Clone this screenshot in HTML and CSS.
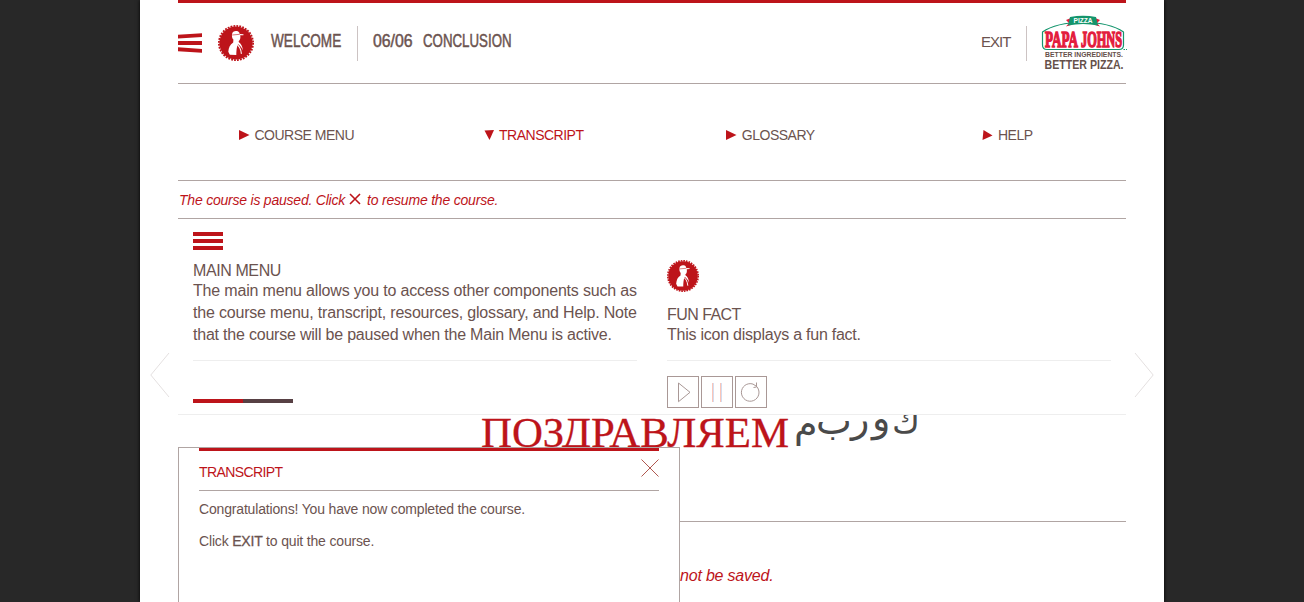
FILE: index.html
```html
<!DOCTYPE html>
<html lang="en">
<head>
<meta charset="utf-8">
<title>Conclusion</title>
<link rel="stylesheet" href="styles.css">
</head>
<body>
<svg class="defs" width="0" height="0">
  <symbol id="seal" viewBox="0 0 36 36">
    <circle cx="18" cy="18" r="16.6" fill="#bd141a"/>
    <circle cx="18" cy="18" r="17.1" fill="none" stroke="#bd141a" stroke-width="1.8" stroke-dasharray="1.8 1.18"/>
    <path fill="#fff" d="M14 9.400C14.300 6.600 16.400 5.800 18.600 6C20.600 6.200 21.400 7.400 21.700 8.900L25.500 9.300L25.400 10.200L22.200 10.300C22.700 12.500 22.300 15 20.800 16L20.400 18.400C19 20.500 18.500 23.500 18.300 29.900L11.800 29.700L10.300 26.700C10.700 22.500 12 19.300 15.200 17.400L15.400 14.600C14.300 13.500 13.700 11.500 14 9.400Z"/>
    <path fill="none" stroke="#bd141a" stroke-width=".6" d="M14.200 10L21.800 9.300"/>
    <path fill="none" stroke="#fff" stroke-width="1.100" d="M17.500 18.500C21 20.300 23 24 23.400 28.900"/>
    <path fill="#fff" d="M20.300 16.800C23 18.300 24.600 21.500 24.800 25.500C23.500 22 21.800 19.800 19 18.500Z"/>
  </symbol>
</svg>
<div class="page">
  <header class="header">
    <svg class="burger" width="24" height="20" viewBox="0 0 24 20" fill="#bd141a"><path d="M0 1.700L24 .3V4L0 5.500ZM0 8H24V12H0ZM0 14.300L24 16V19.800L0 18.200Z"/></svg>
    <svg class="seal" width="36" height="36"><use href="#seal"/></svg>
    <div class="crumb crumb-first"><span class="narrow title">WELCOME</span></div>
    <div class="crumb crumb-count"><span class="narrow count">06/06</span></div>
    <div class="crumb crumb-last"><span class="narrow name">CONCLUSION</span></div>
    <div class="exit">EXIT</div>
    <svg class="logo" width="88" height="58" viewBox="1040 13 88 58">
      <path d="M1047 48.500Q1042.500 48.500 1042.500 44V31C1051 25 1065 21.500 1083 21.500S1115 25 1123.500 31V44Q1123.500 48.500 1119 48.500Z" fill="#fff" stroke="#14956d" stroke-width="1.200"/>
      <path d="M1066 19L1071 17V24L1066 25.500L1069 22ZM1100 19L1095 17V24L1100 25.500L1097 22Z" fill="#e31c3d"/>
      <path d="M1070 16Q1083 13.500 1096 16L1098 24.500Q1083 21.500 1068 24.500Z" fill="#14956d"/>
      <text x="1073.500" y="21.700" class="logo-pizza" textLength="19" lengthAdjust="spacingAndGlyphs">PIZZA</text>
      <text x="1045" y="45.500" class="logo-name" textLength="33" lengthAdjust="spacingAndGlyphs">PAPA</text>
      <text x="1081" y="45.500" class="logo-name" textLength="41" lengthAdjust="spacingAndGlyphs">JOHNS</text>
      <text x="1045" y="56" class="logo-tag" font-size="7.500" textLength="78" lengthAdjust="spacingAndGlyphs">BETTER INGREDIENTS.</text>
      <text x="1044.500" y="67.700" class="logo-tag" font-size="12.500" textLength="79" lengthAdjust="spacingAndGlyphs">BETTER PIZZA.</text>
      <path d="M1123.500 48.500h1.500M1126 48.500h1" stroke="#14956d"/>
    </svg>
  </header>

  <nav class="nav">
    <a class="nav-item"><svg width="11" height="10" viewBox="0 0 11 10"><path d="M0 0L10.500 5L0 10Z"/></svg>COURSE MENU</a>
    <a class="nav-item active"><svg width="11" height="10" viewBox="0 0 11 10"><path d="M.5.500L10 0L5.500 10Z"/></svg>TRANSCRIPT</a>
    <a class="nav-item"><svg width="11" height="10" viewBox="0 0 11 10"><path d="M0 0L10.500 5L0 10Z"/></svg>GLOSSARY</a>
    <a class="nav-item"><svg width="11" height="10" viewBox="0 0 11 10"><path d="M1.500 0L10.500 5.500L.5 10Z"/></svg>HELP</a>
  </nav>

  <div class="notice"><span class="notice-a">The course is paused. Click</span><svg width="12" height="12" viewBox="0 0 12 12"><path d="M1 1L11 11M11 1L1 11"/></svg><span class="notice-b">to resume the course.</span></div>

  <section class="help">
    <div class="help-col">
      <div class="help-body">
        <div class="bars"><i></i><i></i><i></i></div>
        <h2>MAIN MENU</h2>
        <p><span class="l1">The main menu allows you to access other components such as</span><br><span class="l2">the course menu, transcript, resources, glossary, and Help. Note</span><br><span class="l3">that the course will be paused when the Main Menu is active.</span></p>
      </div>
      <div class="progress"><i class="done"></i><i class="rest"></i></div>
    </div>
    <div class="help-col">
      <div class="help-body fact">
        <svg class="small-seal" width="32" height="32"><use href="#seal"/></svg>
        <h2>FUN FACT</h2>
        <p class="l4">This icon displays a fun fact.</p>
      </div>
      <div class="controls">
        <svg width="32" height="32" viewBox="0 0 32 32"><rect x=".5" y=".5" width="31" height="31"/><path d="M11.500 7V25.700L23 16.300Z"/></svg>
        <svg width="32" height="32" viewBox="0 0 32 32"><rect x=".5" y=".5" width="31" height="31"/><path class="pause-a" d="M11.500 7V26M19.500 7V26"/><path class="pause-b" d="M12.500 7V26M20.500 7V26"/></svg>
        <svg width="32" height="32" viewBox="0 0 32 32"><rect x=".5" y=".5" width="31" height="31"/><path d="M21.500 10.300A8.800 8.800 0 1 1 18 8.100L21.500 10.300M21.500 6.500V11L18.500 11.500"/></svg>
      </div>
    </div>
  </section>

  <div class="hero">
    <svg width="948" height="106" viewBox="178 415 948 106">
      <text x="481" y="446.500" class="cyrillic" textLength="308" lengthAdjust="spacingAndGlyphs">ПОЗДРАВЛЯЕМ</text>
      <g class="arabic"><text x="794" y="437">م</text><text x="816" y="434">ب</text><text x="851" y="432">ر</text><text x="872" y="431">و</text><text x="892" y="433" font-size="34">ك</text></g>
    </svg>
  </div>
  <div class="footnote">not be saved.</div>

  <svg class="arrow arrow-left" width="20" height="46" viewBox="0 0 20 46"><path d="M19 1L.8 23L19 45"/></svg>
  <svg class="arrow arrow-right" width="20" height="46" viewBox="0 0 20 46"><path d="M1 1L19.200 23L1 45"/></svg>

  <aside class="transcript">
    <div class="transcript-head"><span>TRANSCRIPT</span><svg width="18" height="18" viewBox="0 0 18 18"><path d="M.5.500L17.500 17.500M17.500.500L.5 17.500"/></svg></div>
    <p class="t1">Congratulations! You have now completed the course.</p>
    <p class="t2">Click <b>EXIT</b> to quit the course.</p>
  </aside>
</div>
</body>
</html>
```
FILE: styles.css
```css
* { box-sizing: border-box; }
html, body { height: 100%; }
body {
  margin: 0;
  background: #282828;
  color: #6b534f;
  font-family: "Liberation Sans", Arial, sans-serif;
  overflow: hidden;
}
.defs { position: absolute; }
.page {
  position: relative;
  width: 1024px;
  height: 602px;
  margin: 0 auto;
  padding: 0 38px;
  background: #fff;
  box-shadow: 0 0 4px #000;
}
.header {
  display: flex;
  align-items: center;
  height: 84px;
  border-top: 3px solid #bd141a;
  border-bottom: 1px solid #b0a5a3;
}
.seal { margin: 0 17px 0 16px; }
.crumb { height: 35px; line-height: 31px; font-size: 18px; }
.crumb-first { width: 87px; border-right: 1px solid #ccc3c3; }
.crumb-count { width: 35px; margin-left: 15px; }
.crumb-last { width: 95px; margin-left: 15px; }
.narrow {
  display: inline-block;
  white-space: nowrap;
  transform-origin: 0 50%;
  -webkit-text-stroke: .5px currentColor;
}
.title { transform: scaleX(.755); }
.count { transform: scaleX(.88); }
.name { transform: scaleX(.738); }
.exit {
  width: 46px;
  height: 35px;
  margin-left: auto;
  border-right: 1px solid #ccc3c3;
  font-size: 15px;
  line-height: 32px;
  letter-spacing: -1px;
}
.logo { margin: -1px -2px 0 13px; overflow: visible; }
.logo-pizza { font: bold 6.5px "Liberation Sans", sans-serif; fill: #fff; }
.logo-name { font: bold 24px "Liberation Serif", serif; fill: #e31c3d; stroke: #e31c3d; stroke-width: 1.6px; }
.logo-tag { font-family: "Liberation Sans", sans-serif; font-weight: bold; fill: #65504a; }

.nav {
  display: grid;
  grid-template-columns: 237px 237px 237px 237px;
  height: 97px;
  border-bottom: 1px solid #b0a5a3;
  align-items: center;
}
.nav-item {
  display: flex;
  align-items: center;
  justify-content: center;
  gap: 4.5px;
  padding-top: 6px;
  font-size: 14px;
  letter-spacing: -.5px;
}
.nav-item svg { fill: #bd141a; }
.active { color: #bd141a; }

.notice {
  display: flex;
  align-items: center;
  height: 38px;
  padding-left: 1px;
  border-bottom: 1px solid #b0a5a3;
  color: #bd141a;
  font-size: 14px;
  font-style: italic;
}
.notice svg { margin: -2px 6px 0 4px; stroke: #bd141a; stroke-width: 1.6; }
.notice-a { letter-spacing: -.22px; }
.notice-b { letter-spacing: -.2px; }

.help {
  display: grid;
  grid-template-columns: 444px 444px;
  gap: 30px;
  height: 196px;
  padding: 0 15px;
  border-bottom: 1px solid #eee;
}
.help-body { height: 142px; padding-top: 13px; border-bottom: 1px solid #eee; }
.help-body.fact { padding-top: 41px; }
.bars { display: flex; flex-direction: column; gap: 3px; width: 30px; }
.bars i { height: 4px; background: #bd141a; }
.small-seal { display: block; }
h2 { margin: 11px 0 0; font-size: 16px; font-weight: normal; line-height: 20px; letter-spacing: -.4px; }
.fact h2 { margin-top: 13px; letter-spacing: -.55px; }
.help p { margin: -1px 0 0; font-size: 16px; line-height: 22px; white-space: nowrap; }
.l1 { letter-spacing: -.18px; }
.l2 { letter-spacing: -.19px; }
.l3 { letter-spacing: -.21px; }
.l4 { letter-spacing: -.24px; }
.progress { display: flex; margin-top: 38px; }
.progress i { width: 50px; height: 4px; background: #bd141a; }
.progress .rest { background: #574044; }
.controls { display: flex; gap: 2px; margin-top: 15px; }
.controls svg { fill: none; stroke: #a99896; }
.controls .pause-a { stroke: #fbc5b8; }
.controls .pause-b { stroke: #d3dcf0; }

.hero { height: 107px; border-bottom: 1px solid #b0a5a3; }
.hero svg { display: block; }
.cyrillic { font-family: "Liberation Serif", serif; font-size: 43px; fill: #bd141a; stroke: #bd141a; stroke-width: .3px; }
.arabic { font-family: "DejaVu Sans", sans-serif; font-size: 38px; fill: #4a4a4a; }
.footnote {
  padding: 44px 0 0 502px;
  color: #bd141a;
  font-size: 16px;
  font-style: italic;
  line-height: 20px;
  letter-spacing: -.2px;
}

.arrow { position: absolute; top: 352px; fill: none; stroke: #e4e0e0; }
.arrow-left { left: 10px; }
.arrow-right { right: 10px; }

.transcript {
  position: absolute;
  left: 38px;
  top: 447px;
  width: 502px;
  height: 155px;
  padding: 0 20px;
  background: #fff;
  border: 1px solid #b0a5a3;
  border-bottom: 0;
  font-size: 14px;
}
.transcript-head {
  display: flex;
  justify-content: space-between;
  height: 43px;
  border-top: 3px solid #bd141a;
  border-bottom: 1px solid #b0a5a3;
  color: #bd141a;
  line-height: 42px;
  letter-spacing: -.6px;
}
.transcript-head svg { margin-top: 8px; stroke: #b0584f; stroke-width: 1; }
.transcript p { margin: 0; line-height: 16px; letter-spacing: -.17px; }
.transcript .t1 { margin-top: 10px; }
.transcript .t2 { margin-top: 16px; }
.transcript b { font-weight: normal; -webkit-text-stroke: .3px currentColor; }
```
